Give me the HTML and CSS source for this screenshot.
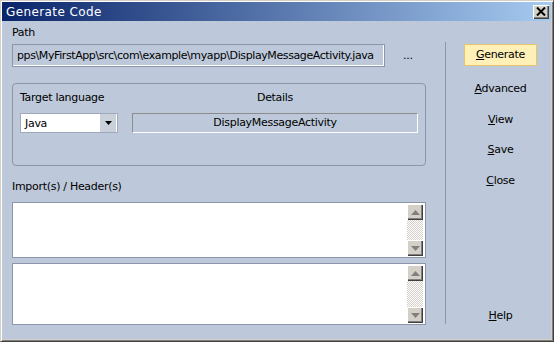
FILE: index.html
```html
<!DOCTYPE html>
<html lang="en">
<head>
  <meta charset="utf-8" />
  <title>Generate Code</title>
  <link rel="stylesheet" href="styles.css">
</head>
<body>
  <div class="window">
    <div class="titlebar">
      <span class="title">Generate Code</span>
      <span class="close">
        <svg width="10" height="9" viewBox="0 0 10 9"><path d="M1 0.5 L9 8.5 M9 0.5 L1 8.5" stroke="#000" stroke-width="2"/></svg>
      </span>
    </div>

    <div class="content">
      <div class="main">
        <div class="label">Path</div>
        <div class="path-row">
          <div class="path-field">pps\MyFirstApp\src\com\example\myapp\DisplayMessageActivity.java</div>
          <span class="browse">...</span>
        </div>

        <div class="group">
          <div class="group-col lang">
            <div class="label">Target language</div>
            <div class="combo">
              <span class="combo-text">Java</span>
              <span class="combo-btn">
                <svg width="7" height="4" viewBox="0 0 7 4"><path d="M0 0 H7 L3.5 4 Z" fill="#000"/></svg>
              </span>
            </div>
          </div>
          <div class="group-col details">
            <div class="label centered">Details</div>
            <div class="details-field">DisplayMessageActivity</div>
          </div>
        </div>

        <div class="label imports">Import(s) / Header(s)</div>
        <div class="textbox tall-a">
          <div class="scrollbar">
            <span class="sb-btn"><svg width="9" height="5" viewBox="0 0 9 5"><path d="M0 5 L4.5 0 L9 5 Z" fill="#808080"/></svg></span>
            <span class="sb-track"></span>
            <span class="sb-btn"><svg width="9" height="5" viewBox="0 0 9 5"><path d="M0 0 L4.5 5 L9 0 Z" fill="#808080"/></svg></span>
          </div>
        </div>
        <div class="textbox tall-b">
          <div class="scrollbar">
            <span class="sb-btn"><svg width="9" height="5" viewBox="0 0 9 5"><path d="M0 5 L4.5 0 L9 5 Z" fill="#808080"/></svg></span>
            <span class="sb-track"></span>
            <span class="sb-btn"><svg width="9" height="5" viewBox="0 0 9 5"><path d="M0 0 L4.5 5 L9 0 Z" fill="#808080"/></svg></span>
          </div>
        </div>
      </div>

      <div class="separator"></div>

      <div class="side">
        <div class="btn primary"><u>G</u>enerate</div>
        <div class="btn"><u>A</u>dvanced</div>
        <div class="btn"><u>V</u>iew</div>
        <div class="btn"><u>S</u>ave</div>
        <div class="btn"><u>C</u>lose</div>
        <div class="btn help"><u>H</u>elp</div>
      </div>
    </div>
  </div>
</body>
</html>
```

FILE: styles.css
```css
* {
    margin: 0;
    padding: 0;
    box-sizing: border-box;
}

body {
    width: 554px;
    height: 342px;
    overflow: hidden;
    font-family: "DejaVu Sans", sans-serif;
    font-size: 11px;
    letter-spacing: -0.3px;
    color: #000;
}

.window {
    width: 554px;
    height: 342px;
    border-top: 1px solid #d4d0c8;
    border-left: 1px solid #d4d0c8;
    border-right: 1px solid #404040;
    border-bottom: 1px solid #404040;
    background: #d4d0c8;
    display: flex;
    flex-direction: column;
    box-shadow: inset 1px 1px 0 #fff, inset -1px -1px 0 #808080;
    padding: 1px 2px 2px 1px;
}

.titlebar {
    height: 19px;
    display: flex;
    align-items: center;
    justify-content: space-between;
    background: linear-gradient(to right, #0a246a, #a6caf0);
    padding: 0 2px 0 4px;
}

.title {
    color: #fff;
    font-size: 12px;
    letter-spacing: 0.4px;
}

.close {
    width: 16px;
    height: 14px;
    background: #d4d0c8;
    display: flex;
    align-items: center;
    justify-content: center;
    box-shadow: inset 1px 1px 0 #fff, inset -1px -1px 0 #404040, inset -2px -2px 0 #808080;
}

.content {
    flex: 1;
    display: flex;
    background: #bdc9da;
}

.main {
    width: 414px;
    margin-left: 10px;
    padding-top: 5px;
}

.label {
    line-height: 14px;
    height: 14px;
}

.label.centered {
    text-align: center;
}

.path-row {
    display: flex;
    align-items: center;
    margin-top: 4px;
}

.path-field {
    width: 373px;
    height: 23px;
    line-height: 21px;
    padding-left: 4px;
    letter-spacing: -0.4px;
    white-space: nowrap;
    overflow: hidden;
    border: 1px solid #8b97a9;
    box-shadow: inset -1px -1px 0 #fff;
}

.browse {
    margin-left: 18px;
}

.group {
    margin-top: 16px;
    height: 83px;
    border: 1px solid #8b97a9;
    border-radius: 4px;
    display: flex;
    padding: 7px 7px 0 7px;
    gap: 14px;
}

.group-col .label {
    margin-bottom: 8px;
}

.combo {
    width: 98px;
    height: 20px;
    background: #fff;
    border: 1px solid #9ea9b9;
    display: flex;
    align-items: center;
}

.combo-text {
    flex: 1;
    padding-left: 4px;
}

.combo-btn {
    width: 16px;
    height: 18px;
    margin-right: 1px;
    background: #c9d0da;
    display: flex;
    align-items: center;
    justify-content: center;
}

.details {
    flex: 1;
}

.details-field {
    height: 20px;
    line-height: 18px;
    text-align: center;
    border: 1px solid #fff;
    border-top-color: #8c8c8c;
    border-left-color: #8c8c8c;
}

.imports {
    margin-top: 14px;
}

.textbox {
    background: #fff;
    border: 1px solid #8b97a9;
    display: flex;
    justify-content: flex-end;
    padding: 1px 2px 1px 0;
}

.tall-a {
    margin-top: 8px;
    height: 56px;
}

.tall-b {
    margin-top: 5px;
    height: 62px;
}

.scrollbar {
    width: 16px;
    display: flex;
    flex-direction: column;
}

.sb-btn {
    height: 16px;
    background: #d4d0c8;
    display: flex;
    align-items: center;
    justify-content: center;
    box-shadow: inset 1px 1px 0 #fff, inset -1px -1px 0 #404040, inset -2px -2px 0 #808080;
}

.sb-track {
    flex: 1;
    background: repeating-conic-gradient(#d4d0c8 0 25%, #fff 0 50%) 0 0 / 2px 2px;
}

.separator {
    width: 1px;
    margin: 21px 0 15px 19px;
    background: #8b97a9;
}

.side {
    flex: 1;
    display: flex;
    flex-direction: column;
    align-items: center;
    padding-top: 23px;
    padding-left: 4px;
}

.btn {
    width: 73px;
    height: 22px;
    line-height: 20px;
    text-align: center;
    border: 1px solid transparent;
    margin-bottom: 8.5px;
}

.btn.primary {
    background: #fff0b8;
    border-color: #e6c56e;
    margin-bottom: 12px;
}

.btn.help {
    margin-top: auto;
    margin-bottom: 12px;
}
```
